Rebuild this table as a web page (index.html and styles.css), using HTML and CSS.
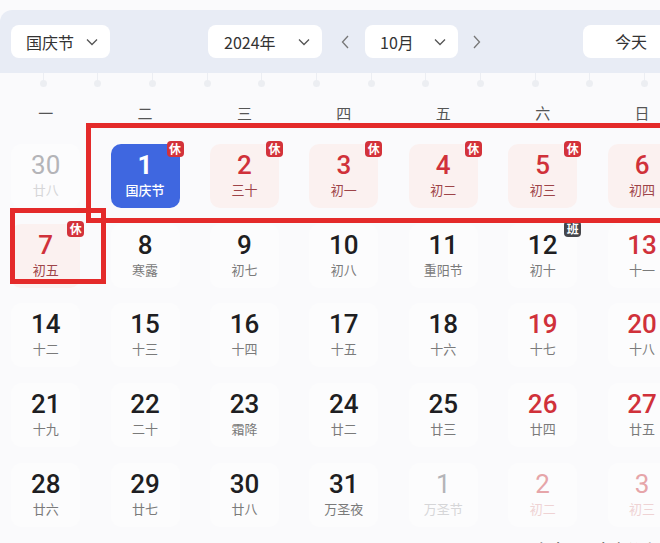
FILE: index.html
```html
<!DOCTYPE html>
<html lang="zh-CN">
<head>
  <meta charset="UTF-8" />
  <title>日历</title>
  <link rel="stylesheet" href="styles.css">
</head>
<body>
  <div class="page">
    <!-- toolbar -->
    <div class="toolbar">
      <div class="select holiday">国庆节<svg class="chev" viewBox="0 0 12 8"><polyline points="1,1.5 6,6.5 11,1.5" /></svg></div>
      <div class="select year">2024年<svg class="chev" viewBox="0 0 12 8"><polyline points="1,1.5 6,6.5 11,1.5" /></svg></div>
      <span class="nav prev"><svg viewBox="0 0 8 14"><polyline points="7,1 1.5,7 7,13" /></svg></span>
      <div class="select month">10月<svg class="chev" viewBox="0 0 12 8"><polyline points="1,1.5 6,6.5 11,1.5" /></svg></div>
      <span class="nav next"><svg viewBox="0 0 8 14"><polyline points="1,1 6.5,7 1,13" /></svg></span>
      <div class="today-btn">今天</div>
    </div>

    <div class="pins">
      <i></i><i></i><i></i><i></i><i></i><i></i><i></i><i></i><i></i><i></i><i></i><i></i>
    </div>

    <div class="weekdays">
      <span>一</span><span>二</span><span>三</span><span>四</span><span>五</span><span>六</span><span>日</span>
    </div>

    <div class="days">
      <!-- week 1 -->
      <div class="cell"><div class="day other"><b class="num">30</b><span class="lunar">廿八</span></div></div>
      <div class="cell"><div class="day active"><b class="num">1</b><span class="lunar">国庆节</span><em class="badge">休</em></div></div>
      <div class="cell"><div class="day rest"><b class="num">2</b><span class="lunar">三十</span><em class="badge">休</em></div></div>
      <div class="cell"><div class="day rest"><b class="num">3</b><span class="lunar">初一</span><em class="badge">休</em></div></div>
      <div class="cell"><div class="day rest"><b class="num">4</b><span class="lunar">初二</span><em class="badge">休</em></div></div>
      <div class="cell"><div class="day rest"><b class="num">5</b><span class="lunar">初三</span><em class="badge">休</em></div></div>
      <div class="cell"><div class="day rest"><b class="num">6</b><span class="lunar">初四</span><em class="badge">休</em></div></div>
      <!-- week 2 -->
      <div class="cell"><div class="day rest"><b class="num">7</b><span class="lunar">初五</span><em class="badge">休</em></div></div>
      <div class="cell"><div class="day"><b class="num">8</b><span class="lunar">寒露</span></div></div>
      <div class="cell"><div class="day"><b class="num">9</b><span class="lunar">初七</span></div></div>
      <div class="cell"><div class="day"><b class="num">10</b><span class="lunar">初八</span></div></div>
      <div class="cell"><div class="day"><b class="num">11</b><span class="lunar">重阳节</span></div></div>
      <div class="cell"><div class="day"><b class="num">12</b><span class="lunar">初十</span><em class="badge work">班</em></div></div>
      <div class="cell"><div class="day weekend"><b class="num">13</b><span class="lunar">十一</span></div></div>
      <!-- week 3 -->
      <div class="cell"><div class="day"><b class="num">14</b><span class="lunar">十二</span></div></div>
      <div class="cell"><div class="day"><b class="num">15</b><span class="lunar">十三</span></div></div>
      <div class="cell"><div class="day"><b class="num">16</b><span class="lunar">十四</span></div></div>
      <div class="cell"><div class="day"><b class="num">17</b><span class="lunar">十五</span></div></div>
      <div class="cell"><div class="day"><b class="num">18</b><span class="lunar">十六</span></div></div>
      <div class="cell"><div class="day weekend"><b class="num">19</b><span class="lunar">十七</span></div></div>
      <div class="cell"><div class="day weekend"><b class="num">20</b><span class="lunar">十八</span></div></div>
      <!-- week 4 -->
      <div class="cell"><div class="day"><b class="num">21</b><span class="lunar">十九</span></div></div>
      <div class="cell"><div class="day"><b class="num">22</b><span class="lunar">二十</span></div></div>
      <div class="cell"><div class="day"><b class="num">23</b><span class="lunar">霜降</span></div></div>
      <div class="cell"><div class="day"><b class="num">24</b><span class="lunar">廿二</span></div></div>
      <div class="cell"><div class="day"><b class="num">25</b><span class="lunar">廿三</span></div></div>
      <div class="cell"><div class="day weekend"><b class="num">26</b><span class="lunar">廿四</span></div></div>
      <div class="cell"><div class="day weekend"><b class="num">27</b><span class="lunar">廿五</span></div></div>
      <!-- week 5 -->
      <div class="cell"><div class="day"><b class="num">28</b><span class="lunar">廿六</span></div></div>
      <div class="cell"><div class="day"><b class="num">29</b><span class="lunar">廿七</span></div></div>
      <div class="cell"><div class="day"><b class="num">30</b><span class="lunar">廿八</span></div></div>
      <div class="cell"><div class="day"><b class="num">31</b><span class="lunar">万圣夜</span></div></div>
      <div class="cell"><div class="day other"><b class="num">1</b><span class="lunar">万圣节</span></div></div>
      <div class="cell"><div class="day other weekend"><b class="num">2</b><span class="lunar">初二</span></div></div>
      <div class="cell"><div class="day other weekend"><b class="num">3</b><span class="lunar">初三</span></div></div>
    </div>

    <!-- red annotation boxes drawn over the calendar -->
    <div class="mark mark-week"></div>
    <div class="mark mark-day"></div>

    <div class="watermark">头条 @自新诉从</div>
  </div>
</body>
</html>
```

FILE: styles.css
```css
html, body {
  margin: 0;
  padding: 0;
}
body {
  width: 660px;
  height: 543px;
  overflow: hidden;
  background: #fafafc;
  font-family: "Noto Sans CJK SC", "Noto Sans", sans-serif;
  color: #2a2a2a;
}
.page {
  position: relative;
  padding-top: 10px;
  height: 533px;
}

/* toolbar */
.toolbar {
  display: flex;
  align-items: center;
  height: 63px;
  padding-left: 11px;
  background: #e8ecf5;
  border-radius: 12px 0 0 0;
}
.toolbar > * {
  flex-shrink: 0;
}
.select {
  display: flex;
  align-items: center;
  justify-content: space-between;
  box-sizing: border-box;
  height: 33px;
  padding: 0 12px 0 15px;
  background: #fff;
  border-radius: 8px;
  font-size: 16px;
  color: #333;
}
.select.holiday {
  width: 99px;
  margin-right: 98px;
}
.select.year {
  width: 114px;
  padding-left: 16px;
}
.select.month {
  width: 93px;
  margin-left: 14px;
}
.chev {
  width: 12px;
  height: 8px;
  fill: none;
  stroke: #555;
  stroke-width: 1.3;
}
.nav {
  display: flex;
  width: 12px;
  justify-content: center;
}
.nav svg {
  width: 8px;
  height: 14px;
  fill: none;
  stroke: #777;
  stroke-width: 1.3;
}
.nav.prev {
  margin-left: 17px;
}
.nav.next {
  margin-left: 13px;
}
.today-btn {
  box-sizing: border-box;
  width: 96px;
  height: 33px;
  margin-left: 100px;
  background: #fff;
  border-radius: 8px;
  font-size: 16px;
  line-height: 33px;
  text-align: center;
  color: #333;
}

/* binder pins under the toolbar */
.pins {
  display: grid;
  grid-template-columns: repeat(12, 54.7px);
  margin-left: 15.7px;
  height: 20px;
}
.pins i {
  position: relative;
  justify-self: center;
  width: 1px;
  height: 7px;
  background: #eceef3;
}
.pins i::after {
  content: "";
  position: absolute;
  left: -3px;
  top: 7px;
  width: 7px;
  height: 7px;
  border-radius: 50%;
  background: #eceef2;
}

/* weekday header */
.weekdays {
  display: grid;
  grid-template-columns: repeat(7, 99.4px);
  margin-left: -4px;
  height: 38px;
  align-items: center;
  font-size: 15px;
  color: #555;
}
.weekdays span {
  text-align: center;
}

/* day grid */
.days {
  display: grid;
  grid-template-columns: repeat(7, 99.4px);
  grid-auto-rows: 79.7px;
  margin-left: -4px;
  padding-top: 13px;
}
.cell {
  display: flex;
  justify-content: center;
}
.day {
  position: relative;
  box-sizing: border-box;
  width: 69px;
  height: 64px;
  padding-top: 7px;
  border-radius: 10px;
  background: #fcfcfd;
  text-align: center;
}
.num {
  display: block;
  font-family: Roboto, "Liberation Sans", sans-serif;
  font-weight: 500;
  font-size: 26px;
  line-height: 28px;
  color: #1e1e22;
}
.lunar {
  display: block;
  margin-top: 3px;
  font-size: 13px;
  line-height: 16px;
  color: #7a7a7a;
}
.day.weekend .num {
  color: #d0313a;
}
.day.rest {
  background: #fbf1f0;
}
.day.rest .num {
  color: #d0313a;
}
.day.rest .lunar {
  color: #9e4448;
}
.day.active {
  background: #3f67e0;
}
.day.active .num {
  color: #fff;
  font-weight: 700;
}
.day.active .lunar {
  color: #fff;
  font-weight: 500;
}
.day.other .num {
  color: #b4b4b8;
  font-weight: 400;
}
.day.other .lunar {
  color: #d6d6d8;
}
.day.other.weekend .num {
  color: #e6a5a9;
}
.day.other.weekend .lunar {
  color: #efd3d4;
}
.badge {
  position: absolute;
  top: -3px;
  right: -4px;
  width: 17px;
  height: 16px;
  border-radius: 4px;
  background: #d3323a;
  color: #fff;
  font-style: normal;
  font-weight: 700;
  font-size: 12px;
  line-height: 16px;
  text-align: center;
}
.badge.work {
  background: #45464c;
}

/* annotation rectangles */
.mark {
  position: absolute;
  border: 5px solid #e42a2a;
  box-sizing: border-box;
}
.mark-week {
  left: 86px;
  top: 123px;
  width: 590px;
  height: 100px;
}
.mark-day {
  left: 10px;
  top: 208px;
  width: 96px;
  height: 76px;
}

.watermark {
  position: absolute;
  left: 530px;
  top: 537px;
  font-size: 20px;
  color: #333;
  white-space: nowrap;
}
```
